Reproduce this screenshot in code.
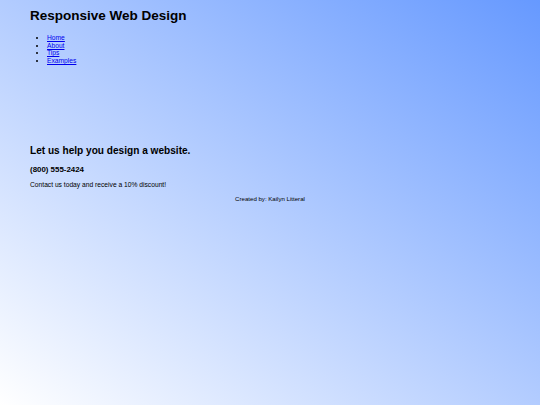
import React from 'react';

const links = ['Home', 'About', 'Tips', 'Examples'];

const App = () => {
    return (
        <div className="min-h-[405px] w-full bg-[linear-gradient(to_top_right,#ffffff,#6699ff)] font-['Liberation_Sans',Arial,sans-serif] text-black">
            <div className="px-[30px] pt-[8px]">
                <h1 className="text-[13.5px] font-bold leading-[15px]">Responsive Web Design</h1>
                <ul className="mt-[11px] list-disc pl-[17px] text-[6.7px] leading-[7.7px]">
                    {links.map((link) => (
                        <li key={link}>
                            <a href="#" className="text-[#0000ee] underline">{link}</a>
                        </li>
                    ))}
                </ul>
                <h2 className="mt-[80px] text-[10.1px] font-bold leading-[12px]">Let us help you design a website.</h2>
                <h3 className="mt-[8px] text-[7.9px] font-bold leading-[9px]">(800) 555-2424</h3>
                <p className="mt-[7px] text-[6.7px] leading-[8px]">Contact us today and receive a 10% discount!</p>
            </div>
            <p className="mt-[6px] text-center text-[6.1px] leading-[7px]">Created by: Kailyn Litteral</p>
        </div>
    );
};

export default App;
